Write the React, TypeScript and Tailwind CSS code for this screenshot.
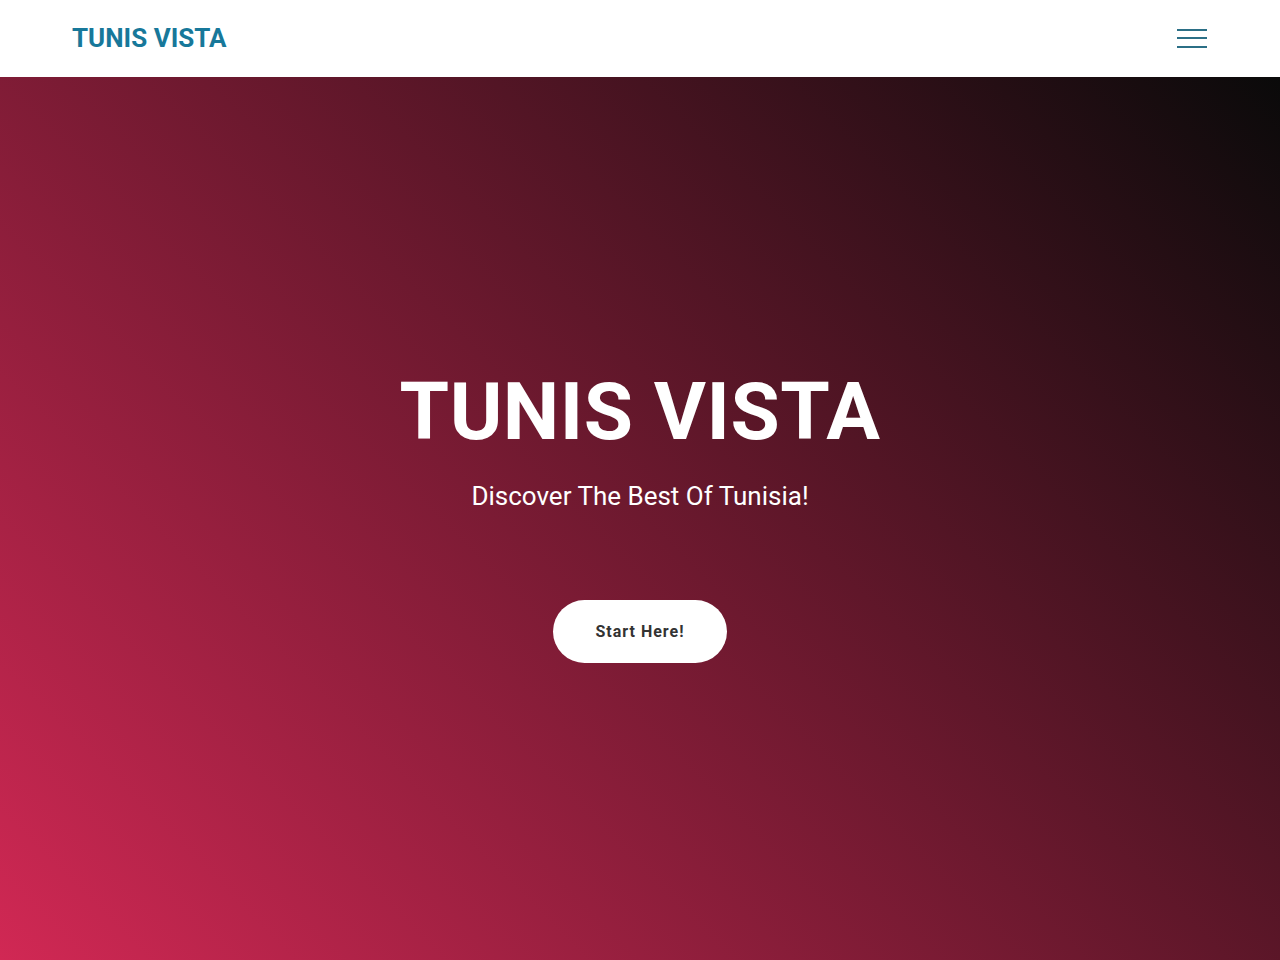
export default function App() {
  return (
    <div className="min-h-screen flex flex-col font-['Roboto',sans-serif]">
      <header className="h-[77px] bg-white flex items-center justify-between px-[72px] shrink-0">
        <a href="#" className="text-[26px] font-bold text-[#17789a] leading-none -mt-[2px]">
          TUNIS VISTA
        </a>
        <button className="w-[30px] h-[19px] flex flex-col justify-between mr-[1px] -mt-[1px]" aria-label="menu">
          <span className="block h-[2px] w-full bg-[#2b6f86]" />
          <span className="block h-[2px] w-full bg-[#2b6f86]" />
          <span className="block h-[2px] w-full bg-[#2b6f86]" />
        </button>
      </header>
      <main className="h-[883px] bg-[linear-gradient(45deg,#d12854,#0a0a0a)] flex flex-col items-center text-white">
        <h1 className="mt-[295px] text-[80px] font-bold leading-none tracking-[0.5px]">TUNIS VISTA</h1>
        <p className="mt-[31px] text-[26px] leading-none">Discover The Best Of Tunisia!</p>
        <button className="mt-[91px] w-[174px] h-[63px] rounded-full bg-white text-[#333] text-[16px] font-bold tracking-[1px]">
          Start Here!
        </button>
      </main>
    </div>
  )
}
